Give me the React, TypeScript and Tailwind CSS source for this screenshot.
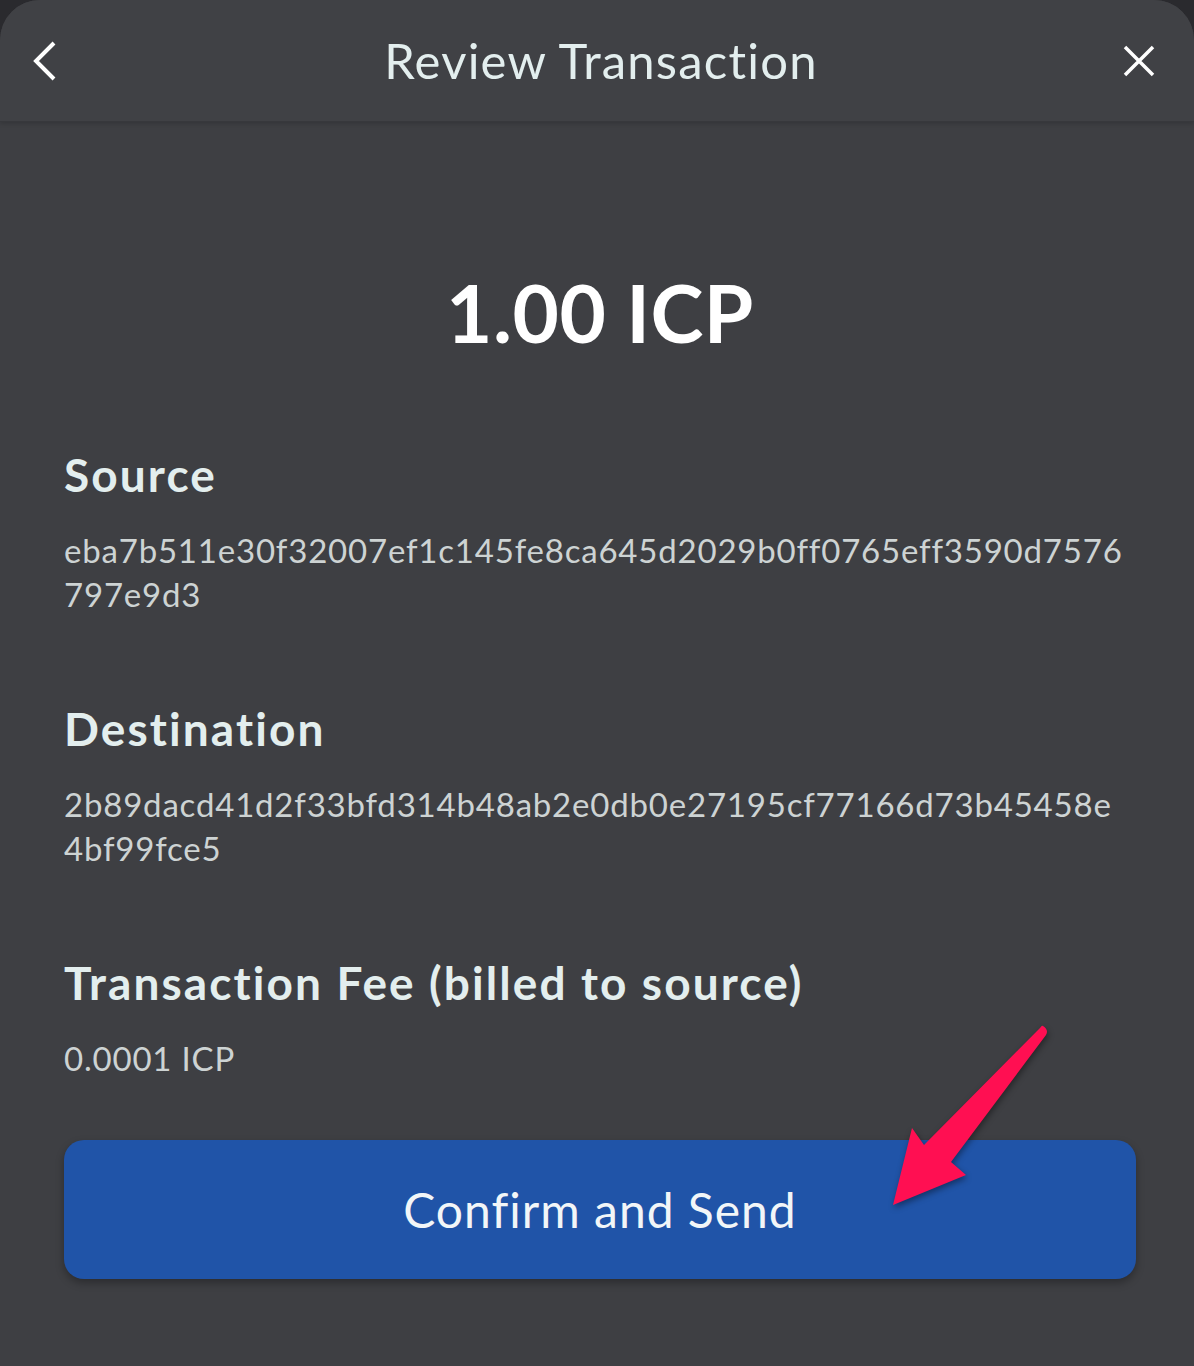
import React from "react";

const Section = ({ title, lines }: { title: string; lines: string[] }) => (
  <div className="flex flex-col gap-[27px]">
    <h2 className="text-[46px] leading-[52px] font-bold tracking-[2.1px] text-[#e3eeee]">{title}</h2>
    <p className="text-[33px] leading-[44px] tracking-[0.8px] text-[#cdd3d3]">
      {lines.map((l) => (
        <span key={l} className="block">
          {l}
        </span>
      ))}
    </p>
  </div>
);

const App = () => {
  return (
    <div
      className="w-[1194px] h-[1366px] bg-[#2a2a2e] overflow-hidden"
      style={{ fontFamily: "Lato, 'Open Sans', sans-serif" }}
    >
      <div className="relative w-full h-full bg-[#3e3f43] rounded-t-[40px] overflow-hidden flex flex-col">
        <header className="h-[122px] flex items-center justify-between px-[30px] bg-[#404145] border-b border-[#37383c] shadow-[0_2px_4px_rgba(0,0,0,0.15)]">
          <svg width="30" height="44" viewBox="0 0 30 44" fill="none">
            <path d="M24 4 L6 22 L24 40" stroke="#ffffff" strokeWidth="4" />
          </svg>
          <h1 className="text-[49px] tracking-[1.2px] text-[#e3eeee] pl-[20px]">Review Transaction</h1>
          <svg width="34" height="34" viewBox="0 0 34 34" fill="none" className="mr-[8px]">
            <path d="M3 3 L31 31 M31 3 L3 31" stroke="#ffffff" strokeWidth="3.5" />
          </svg>
        </header>

        <main className="flex-1 flex flex-col pl-[64px] pr-[58px]">
          <div className="pt-[142px] pb-[89px] text-center">
            <span className="text-[80px] leading-[96px] font-bold text-white tracking-[0.5px]">1.00 ICP</span>
          </div>

          <div className="flex flex-col gap-[87px]">
            <Section
              title="Source"
              lines={["eba7b511e30f32007ef1c145fe8ca645d2029b0ff0765eff3590d7576", "797e9d3"]}
            />
            <Section
              title="Destination"
              lines={["2b89dacd41d2f33bfd314b48ab2e0db0e27195cf77166d73b45458e", "4bf99fce5"]}
            />
            <Section title="Transaction Fee (billed to source)" lines={["0.0001 ICP"]} />
          </div>

          <button className="mt-[60px] h-[139px] w-full rounded-[20px] bg-[#2054a8] shadow-[0_4px_8px_rgba(0,0,0,0.3)] text-[48px] tracking-[1px] text-[#f2f6f8]">
            Confirm and Send
          </button>
        </main>

        <svg
          className="absolute left-[880px] top-[1020px]"
          width="180"
          height="200"
          viewBox="880 1020 180 200"
          style={{ filter: "drop-shadow(1px 3px 3px rgba(0,0,0,0.4))" }}
        >
          <path
            d="M1043 1026 Q1049 1030 1046 1035 L951 1162 L966 1175 L893 1205 L912 1128 L924 1145 L1040 1028 Q1042 1025 1043 1026 Z"
            fill="#ff0f52"
          />
        </svg>
      </div>
    </div>
  );
};

export default App;
